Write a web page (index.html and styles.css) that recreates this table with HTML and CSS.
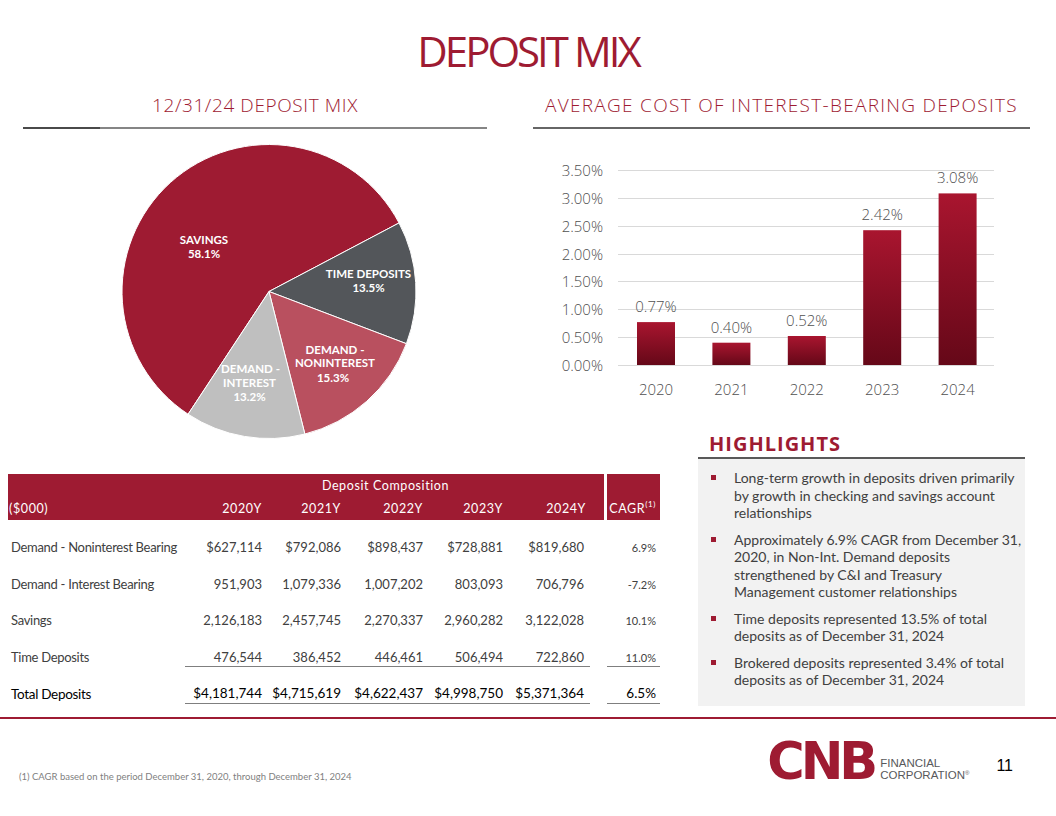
FILE: index.html
```html
<!DOCTYPE html>
<html lang="en">
<head>
<meta charset="utf-8">
<title>Deposit Mix</title>
<link rel="stylesheet" href="styles.css">
</head>
<body>
<h1 class="title">DEPOSIT MIX</h1>

<section class="charts">
  <div class="panel">
    <h2 class="panel-title">12/31/24 DEPOSIT MIX</h2>
    <div class="rule rule-left"></div>
    <svg class="chart" width="464" height="301" viewBox="23 129 464 301">
      <g class="slices">
        <path class="s-savings" d="M269 291.5 L188.08 414.22 A147 147 0 1 1 399.04 222.94 Z"/>
        <path class="s-time" d="M269 291.5 L399.04 222.94 A147 147 0 0 1 406.42 343.70 Z"/>
        <path class="s-nonint" d="M269 291.5 L406.42 343.70 A147 147 0 0 1 304.87 434.06 Z"/>
        <path class="s-int" d="M269 291.5 L304.87 434.06 A147 147 0 0 1 188.08 414.22 Z"/>
      </g>
      <g class="pie-labels">
        <text x="204" y="243.5">SAVINGS</text>
        <text x="204" y="258">58.1%</text>
        <text x="368.5" y="277.5">TIME DEPOSITS</text>
        <text x="368.5" y="292">13.5%</text>
        <text x="335" y="353.5">DEMAND -</text>
        <text x="335" y="367">NONINTEREST</text>
        <text x="333" y="382">15.3%</text>
        <text x="250.5" y="372.5">DEMAND -</text>
        <text x="249.5" y="386.5">INTEREST</text>
        <text x="249.5" y="401">13.2%</text>
      </g>
    </svg>
  </div>
  <div class="panel">
    <h2 class="panel-title panel-title-wide">AVERAGE COST OF INTEREST-BEARING DEPOSITS</h2>
    <div class="rule"></div>
    <svg class="chart" width="497" height="301" viewBox="533 129 497 301">
      <defs>
        <linearGradient id="barFill" x1="0" y1="0" x2="0" y2="1">
          <stop offset="0" stop-color="#A9152F"/>
          <stop offset="1" stop-color="#650818"/>
        </linearGradient>
      </defs>
      <g class="grid">
        <line x1="618" y1="170.5" x2="994" y2="170.5"/>
        <line x1="618" y1="198.5" x2="994" y2="198.5"/>
        <line x1="618" y1="226.5" x2="994" y2="226.5"/>
        <line x1="618" y1="254.5" x2="994" y2="254.5"/>
        <line x1="618" y1="281.5" x2="994" y2="281.5"/>
        <line x1="618" y1="309.5" x2="994" y2="309.5"/>
        <line x1="618" y1="337.5" x2="994" y2="337.5"/>
        <line x1="618" y1="365.5" x2="994" y2="365.5"/>
      </g>
      <g class="axis-y">
        <text x="603" y="176">3.50%</text>
        <text x="603" y="204">3.00%</text>
        <text x="603" y="232">2.50%</text>
        <text x="603" y="260">2.00%</text>
        <text x="603" y="287">1.50%</text>
        <text x="603" y="315">1.00%</text>
        <text x="603" y="343">0.50%</text>
        <text x="603" y="371">0.00%</text>
      </g>
      <g class="bars">
        <rect x="637" y="322.1" width="38" height="42.9"/>
        <rect x="712.4" y="342.7" width="38" height="22.3"/>
        <rect x="787.8" y="336" width="38" height="29"/>
        <rect x="863.2" y="230.2" width="38" height="134.8"/>
        <rect x="938.6" y="193.4" width="38" height="171.6"/>
      </g>
      <g class="values">
        <text x="656" y="312">0.77%</text>
        <text x="731.4" y="332.5">0.40%</text>
        <text x="806.8" y="326">0.52%</text>
        <text x="882.2" y="220">2.42%</text>
        <text x="957.6" y="183">3.08%</text>
      </g>
      <g class="axis-x">
        <text x="656" y="394.5">2020</text>
        <text x="731.4" y="394.5">2021</text>
        <text x="806.8" y="394.5">2022</text>
        <text x="882.2" y="394.5">2023</text>
        <text x="957.6" y="394.5">2024</text>
      </g>
    </svg>
  </div>
</section>

<section class="lower">
  <table class="deposits">
    <colgroup>
      <col class="c-label"><col class="c-y1"><col class="c-y2"><col class="c-y3"><col class="c-y4"><col class="c-y5"><col class="c-pad"><col class="c-gap"><col class="c-cagr">
    </colgroup>
    <thead>
      <tr>
        <th class="h"></th>
        <th class="h h-center" colspan="5">Deposit Composition</th>
        <th class="h"></th>
        <th class="gap"></th>
        <th class="h h-cagr" rowspan="2">CAGR<sup>(1)</sup></th>
      </tr>
      <tr>
        <th class="h h-left">($000)</th>
        <th class="h">2020Y</th>
        <th class="h">2021Y</th>
        <th class="h">2022Y</th>
        <th class="h">2023Y</th>
        <th class="h">2024Y</th>
        <th class="h"></th>
        <th class="gap"></th>
      </tr>
    </thead>
    <tbody>
      <tr>
        <td class="lbl">Demand - Noninterest Bearing</td>
        <td>$627,114</td><td>$792,086</td><td>$898,437</td><td>$728,881</td><td class="last">$819,680</td>
        <td></td><td></td><td class="cagr">6.9%</td>
      </tr>
      <tr>
        <td class="lbl">Demand - Interest Bearing</td>
        <td>951,903</td><td>1,079,336</td><td>1,007,202</td><td>803,093</td><td class="last">706,796</td>
        <td></td><td></td><td class="cagr">-7.2%</td>
      </tr>
      <tr>
        <td class="lbl">Savings</td>
        <td>2,126,183</td><td>2,457,745</td><td>2,270,337</td><td>2,960,282</td><td class="last">3,122,028</td>
        <td></td><td></td><td class="cagr">10.1%</td>
      </tr>
      <tr class="sub">
        <td class="lbl">Time Deposits</td>
        <td class="ul">476,544</td><td class="ul">386,452</td><td class="ul">446,461</td><td class="ul">506,494</td><td class="ul last">722,860</td>
        <td></td><td></td><td class="cagr ul">11.0%</td>
      </tr>
      <tr class="total">
        <td class="lbl">Total Deposits</td>
        <td class="ul">$4,181,744</td><td class="ul">$4,715,619</td><td class="ul">$4,622,437</td><td class="ul">$4,998,750</td><td class="ul last">$5,371,364</td>
        <td></td><td></td><td class="cagr ul">6.5%</td>
      </tr>
    </tbody>
  </table>

  <div class="highlights">
    <h3 class="hl-title">HIGHLIGHTS</h3>
    <ul class="hl-list">
      <li>Long-term growth in deposits driven primarily by growth in checking and savings account relationships</li>
      <li>Approximately 6.9% CAGR from December 31, 2020, in Non-Int. Demand deposits strengthened by C&amp;I and Treasury Management customer relationships</li>
      <li>Time deposits represented 13.5% of total deposits as of December 31, 2024</li>
      <li>Brokered deposits represented 3.4% of total deposits as of December 31, 2024</li>
    </ul>
  </div>
</section>

<footer class="footer">
  <p class="footnote">(1) CAGR based on the period December 31, 2020, through December 31, 2024</p>
  <div class="brand">
    <span class="brand-mark">CNB</span>
    <span class="brand-name">FINANCIAL<br>CORPORATION<sup>®</sup></span>
  </div>
  <span class="page-no">11</span>
</footer>
</body>
</html>
```

FILE: styles.css
```css
* { box-sizing: border-box; }

body {
  margin: 0;
  width: 1056px;
  height: 816px;
  overflow: hidden;
  background: #ffffff;
  font-family: "Open Sans", "Liberation Sans", sans-serif;
  color: #404040;
}

.title {
  margin: 0;
  padding-top: 27px;
  font-family: "Open Sans", sans-serif;
  font-weight: 400;
  font-size: 42px;
  line-height: 48px;
  letter-spacing: -3px;
  color: #9E1B32;
  text-align: center;
}

.charts {
  display: grid;
  grid-template-columns: 464px 497px;
  column-gap: 46px;
  padding-left: 23px;
}

.panel-title {
  margin: 0;
  padding: 18px 0 10px;
  font-family: "Open Sans", sans-serif;
  font-weight: 300;
  font-size: 19px;
  line-height: 24px;
  letter-spacing: 0.6px;
  color: #9E1B32;
  text-align: center;
}

.panel-title-wide {
  letter-spacing: 1.3px;
}

.rule {
  height: 2px;
  background: #666666;
}

.rule-left {
  background: linear-gradient(to right, #4a4a4a 0, #4a4a4a 77px, #858585 77px);
}

.chart {
  display: block;
  overflow: visible;
}

.slices path {
  stroke: #ffffff;
  stroke-width: 1;
}
.s-savings { fill: #9E1B32; }
.s-time { fill: #53565A; }
.s-nonint { fill: #B9505F; }
.s-int { fill: #BFBFBF; }

.pie-labels text {
  font-family: "Lato", "Liberation Sans", sans-serif;
  font-weight: 700;
  font-size: 11.5px;
  fill: #ffffff;
  text-anchor: middle;
}

.grid line {
  stroke: #D9D9D9;
  stroke-width: 1;
}

.axis-y text,
.values text,
.axis-x text {
  font-family: "Open Sans", sans-serif;
  font-weight: 300;
  font-size: 15px;
  fill: #4f4f4f;
}

.axis-y text { text-anchor: end; }
.values text { text-anchor: middle; }
.axis-x text { text-anchor: middle; }

.bars rect { fill: url(#barFill); }

.lower {
  display: grid;
  grid-template-columns: 652px 327px;
  column-gap: 38px;
  padding-left: 8px;
  align-items: start;
}

.deposits {
  margin-top: 44px;
  width: 652px;
  table-layout: fixed;
  border-collapse: separate;
  border-spacing: 0;
  font-family: "Lato", "Liberation Sans", sans-serif;
}

.c-label { width: 177px; }
.c-y1 { width: 81px; }
.c-y2 { width: 79px; }
.c-y3 { width: 82px; }
.c-y4 { width: 80px; }
.c-y5 { width: 83px; }
.c-pad { width: 14px; }
.c-gap { width: 3px; }
.c-cagr { width: 53px; }

.deposits th {
  height: 23px;
  padding: 0 4px 0 0;
  font-weight: 400;
  font-size: 12.5px;
  line-height: 23px;
  letter-spacing: 0.6px;
  color: #ffffff;
  text-align: right;
}

.deposits th.h { background: #9E1B32; }
.deposits th.gap { background: #ffffff; padding: 0; }
.deposits th.h-center { text-align: center; }
.deposits th.h-left { text-align: left; padding-left: 1px; }
.deposits th.h-cagr { vertical-align: bottom; padding-bottom: 0; }

.deposits sup {
  font-size: 8px;
  line-height: 0;
  vertical-align: 6px;
}

.deposits td {
  padding: 19px 4px 0.5px 0;
  font-size: 13px;
  line-height: 17px;
  color: #404040;
  text-align: right;
  white-space: nowrap;
}

.deposits td.lbl {
  text-align: left;
  padding-left: 3px;
  letter-spacing: -0.3px;
}

.deposits td.last { padding-right: 6px; }

.deposits td.cagr {
  font-size: 11px;
}

.deposits td.ul {
  border-bottom: 1px solid #7F7F7F;
}

.deposits tr.total td {
  padding-top: 18px;
  color: #000000;
  font-size: 13.5px;
}

.deposits tr.total td.cagr {
  font-size: 13.5px;
}

.hl-title {
  margin: 2px 0 0;
  padding: 0 0 1px 11px;
  border-bottom: 2px solid #595959;
  font-family: "Open Sans", sans-serif;
  font-weight: 700;
  font-size: 20px;
  line-height: 24px;
  letter-spacing: 1px;
  color: #9E1B32;
}

.hl-list {
  margin: 0;
  padding: 10px 2px 17px 13px;
  list-style: none;
  background: #F2F2F2;
}

.hl-list li {
  position: relative;
  padding-left: 23px;
  margin-bottom: 9px;
  font-family: "Lato", "Open Sans", sans-serif;
  font-size: 14px;
  line-height: 17.5px;
  color: #404040;
}

.hl-list li:last-child { margin-bottom: 0; }

.hl-list li::before {
  content: "";
  position: absolute;
  left: 0;
  top: 6px;
  width: 5px;
  height: 5px;
  background: #9E1B32;
}

.footer {
  margin-top: 11px;
  border-top: 2px solid #9E1B32;
  display: flex;
  align-items: flex-start;
  padding: 24px 43px 0 19px;
}

.footnote {
  margin: 27px 0 0;
  font-family: "Lato", "Open Sans", sans-serif;
  font-size: 9.5px;
  line-height: 14px;
  color: #7F7F7F;
}

.brand {
  margin-left: auto;
  display: flex;
  align-items: flex-end;
}

.brand-mark {
  font-family: "DejaVu Sans", sans-serif;
  font-weight: 700;
  font-size: 51px;
  line-height: 37px;
  letter-spacing: -4px;
  color: #9E1B32;
}

.brand-name {
  margin: 0 0 -1px 6px;
  font-family: "Liberation Sans", sans-serif;
  font-size: 11.5px;
  line-height: 12px;
  color: #58595B;
}

.brand-name sup {
  font-size: 6px;
  line-height: 0;
  vertical-align: 4px;
}

.page-no {
  margin: 14px 0 0 27px;
  font-family: "Liberation Sans", sans-serif;
  font-size: 16px;
  line-height: 18px;
  color: #000000;
}
```
